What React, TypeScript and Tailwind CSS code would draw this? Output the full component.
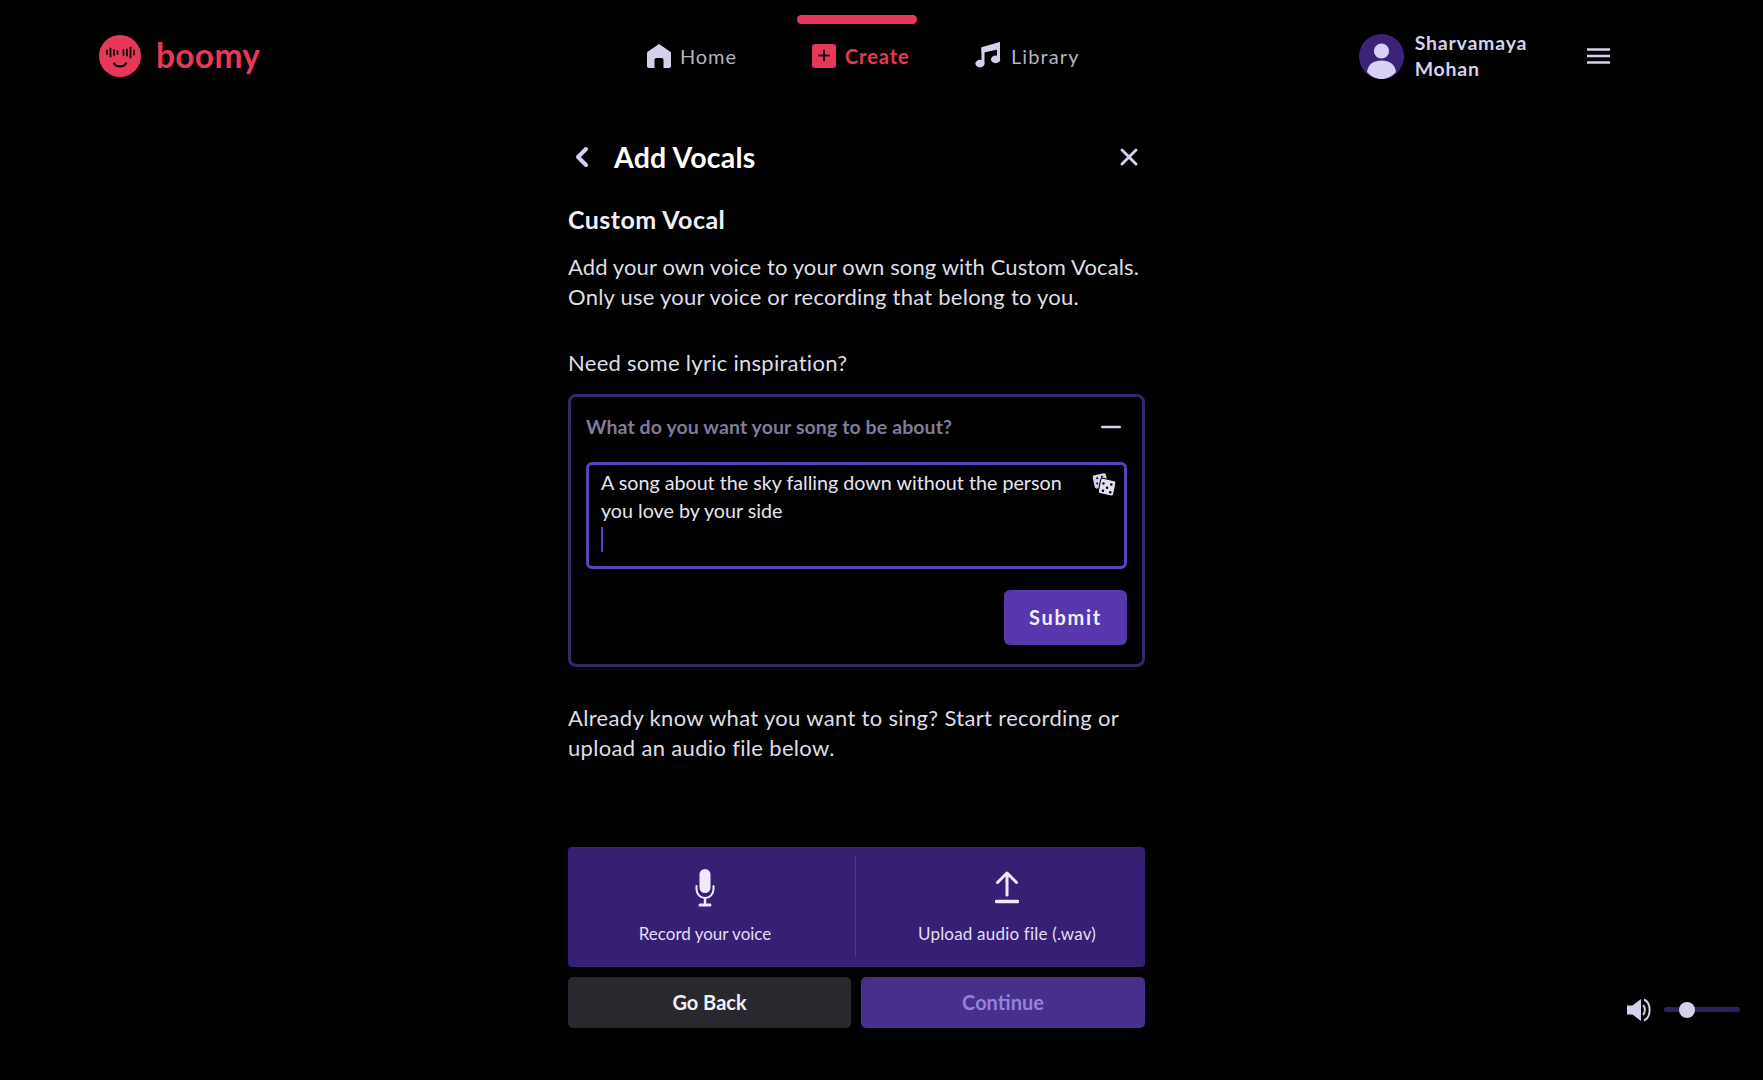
import React from "react";
import { ChevronLeft, X, Minus } from "lucide-react";

const LogoMark = () => (
  <svg width="42" height="42" viewBox="0 0 42 42" className="shrink-0">
    <circle cx="21" cy="21" r="21" fill="#e8385a" />
    <g stroke="#0a0a0a" strokeWidth="1.800" strokeLinecap="round">
      <path d="M8 15.500v3.500M11.500 13.500v8M15 15v5M18.500 16v3M24.500 15v5M28 14.500v6M31.500 12.500v10M35 15.500v4" />
    </g>
    <path d="M15 28.500c2.500 4 9.500 4 12 0" fill="none" stroke="#0a0a0a" strokeWidth="2.200" strokeLinecap="round" />
  </svg>
);

const HomeIcon = () => (
  <svg width="24" height="24" viewBox="0 0 24 24" className="shrink-0">
    <path
      d="M12 0 L23 7.500 C23.700 8 24 8.600 24 9.500 V22 C24 23.200 23.200 24 22 24 H16.500 V16 C16.500 14.800 15.700 14 14.500 14 H9.500 C8.300 14 7.500 14.800 7.500 16 V24 H2 C0.800 24 0 23.200 0 22 V9.500 C0 8.600 0.300 8 1 7.500 Z"
      fill="#d3d1ec"
    />
  </svg>
);

const PlusSquare = () => (
  <svg width="24" height="24" viewBox="0 0 24 24" className="shrink-0">
    <rect width="24" height="24" rx="3" fill="#e8385a" />
    <path d="M12 6.500v10M7 11.500h10" stroke="#1a0a10" strokeWidth="2" strokeLinecap="round" />
  </svg>
);

const MusicIcon = () => (
  <svg width="26" height="28" viewBox="0 0 26 28" className="mb-[5px] shrink-0">
    <path d="M8 23V8.500L23.500 4V19" fill="none" stroke="#d3d1ec" strokeWidth="3" />
    <path d="M6.500 7.500 25 2.500V9L6.500 13z" fill="#d3d1ec" />
    <ellipse cx="5" cy="23.600" rx="4.600" ry="3.800" fill="#d3d1ec" />
    <ellipse cx="20.600" cy="19.400" rx="4.600" ry="3.800" fill="#d3d1ec" />
  </svg>
);

const Avatar = () => (
  <svg width="45" height="45" viewBox="0 0 45 45" className="shrink-0">
    <circle cx="22.500" cy="22.500" r="22.500" fill="#3b2478" />
    <circle cx="22.500" cy="17" r="7.600" fill="#d9d0f5" />
    <path d="M8 38c1-8 7-11.500 14.500-11.500S36 30 37 38c-4 4.500-9 7-14.500 7S12 42.500 8 38z" fill="#d9d0f5" />
  </svg>
);

const HamburgerIcon = () => (
  <svg width="23" height="16" viewBox="0 0 23 16" className="shrink-0">
    <path d="M0 1.500h23M0 8h23M0 14.500h23" stroke="#d3d1ec" strokeWidth="2.600" />
  </svg>
);

const DiceIcon = () => (
  <svg width="25" height="25" viewBox="0 0 24 24" className="shrink-0">
    <rect x="1.500" y="2" width="13" height="13" rx="2" transform="rotate(-12 8 8.500)" fill="#d3d1ec" />
    <g fill="#000">
      <circle cx="5" cy="6" r="1" />
      <circle cx="9.500" cy="4.500" r="1" />
      <circle cx="5" cy="11" r="1" />
    </g>
    <rect x="7" y="7" width="15" height="15" rx="2" transform="rotate(12 14.500 14.500)" fill="#e2e0f4" stroke="#000" strokeWidth="1" />
    <g fill="#000">
      <circle cx="11" cy="11" r="1.200" />
      <circle cx="18.500" cy="12" r="1.200" />
      <circle cx="14.500" cy="15" r="1.200" />
      <circle cx="10.500" cy="18" r="1.200" />
      <circle cx="17.500" cy="19.500" r="1.200" />
    </g>
  </svg>
);

const MicIcon = () => (
  <svg width="20" height="38" viewBox="0 0 20 38" className="shrink-0">
    <rect x="4.500" y="0" width="11" height="24" rx="5.500" fill="#f0e9fd" />
    <path d="M1.500 17v3c0 5 3.500 9 8.500 9s8.500-4 8.500-9v-3" fill="none" stroke="#f0e9fd" strokeWidth="2" strokeLinecap="round" />
    <path d="M10 29v6" stroke="#f0e9fd" strokeWidth="2.400" />
    <path d="M5 36h10" stroke="#f0e9fd" strokeWidth="3" strokeLinecap="round" />
  </svg>
);

const UploadIcon = () => (
  <svg width="24" height="34" viewBox="0 0 24 34" className="shrink-0">
    <path d="M12 24V2M2.500 11.500 12 2l9.500 9.500" fill="none" stroke="#f0e9fd" strokeWidth="3" strokeLinecap="round" strokeLinejoin="round" />
    <path d="M1.500 30.500h21" stroke="#f0e9fd" strokeWidth="3.400" strokeLinecap="round" />
  </svg>
);

const SpeakerIcon = () => (
  <svg width="25" height="24" viewBox="0 0 25 24" className="shrink-0">
    <path d="M0 7.500h5.500L14 1v22l-8.500-6.500H0z" fill="#d3d1ec" />
    <path d="M16 7c2.500 2.500 2.500 7.500 0 10" fill="none" stroke="#d3d1ec" strokeWidth="2" />
    <path d="M17 1.500c7.500 3.500 7.500 17.500 0 21" fill="none" stroke="#d3d1ec" strokeWidth="2" />
  </svg>
);

// --- Main Page ---
export default function App() {
  return (
    <div className="h-[1080px] w-full overflow-hidden bg-black font-['Lato',sans-serif] text-[#e9e7f5]">
      {/* Header */}
      <header className="flex h-[112px] items-start pl-[99px]">
        <div className="flex h-[112px] w-[548px] items-center gap-[15px] pb-[1px]">
          <LogoMark />
          <span className="mt-[1px] text-[33.500px] font-bold leading-none tracking-[0.3px] text-[#e8385a]">boomy</span>
        </div>

        <nav className="flex h-[112px] items-center">
          <a className="flex w-[165px] items-center gap-[9px] text-[20px] tracking-[0.9px] text-[#b4b3c2]">
            <HomeIcon />
            Home
          </a>
          <a className="relative flex h-[112px] w-[163px] items-center gap-[9px] text-[20px] font-bold tracking-[0.9px] text-[#e8385a]">
            <span className="absolute left-[-15px] top-[15px] h-[9px] w-[120px] rounded-full bg-[#e8385a]" />
            <PlusSquare />
            Create
          </a>
          <a className="flex items-center gap-[10px] text-[20px] tracking-[1.100px] text-[#b4b3c2]">
            <MusicIcon />
            Library
          </a>
        </nav>

        <div className="ml-[279px] flex h-[112px] items-center">
          <Avatar />
          <div className="ml-[11px] w-[172px] text-[19.500px] font-bold leading-[26.500px] tracking-[0.8px] text-[#d3d1ec]">
            Sharvamaya
            <br />
            Mohan
          </div>
          <HamburgerIcon />
        </div>
      </header>

      <div className="flex">
        <main className="ml-[568px] w-[577px]">
          {/* Title row */}
          <div className="mt-[11px] flex h-[68px] items-center justify-between pr-[2px]">
            <div className="flex items-center">
              <ChevronLeft className="ml-[-2px] h-[32px] w-[32px] text-[#d3d1ec]" strokeWidth={3} />
              <h1 className="ml-[16px] text-[28.500px] font-bold tracking-[0.2px] text-white">Add Vocals</h1>
            </div>
            <X className="h-[28px] w-[28px] text-[#d3d1ec]" strokeWidth={2.5} />
          </div>

          <h2 className="mt-[12px] text-[25px] font-bold leading-[32px] tracking-[0.45px] text-[#f1f0f8]">Custom Vocal</h2>
          <p className="mt-[16.500px] text-[22px] leading-[30.500px] tracking-[0.24px] text-[#dedde8]">
            <span className="tracking-[0.12px]">Add your own voice to your own song with Custom Vocals.</span>
            <br />
            Only use your voice or recording that belong to you.
          </p>
          <p className="mt-[35px] text-[22px] leading-[30px] tracking-[0.28px] text-[#dedde8]">Need some lyric inspiration?</p>

          {/* Lyric box */}
          <section className="mt-[16px] h-[273px] rounded-[8px] border-[3px] border-[#352668] px-[15px] pt-[10px]">
            <div className="flex h-[40px] items-center justify-between pr-[1px]">
              <span className="text-[19.500px] font-bold tracking-[0.1px] text-[#7f7b9c]">What do you want your song to be about?</span>
              <Minus className="h-[30px] w-[30px] text-[#d3d1ec]" strokeWidth={2} />
            </div>
            <div className="mt-[15px] flex h-[107px] justify-between rounded-[6px] border-[3px] border-[#5a45c0] pl-[12px] pr-[7px] pt-[4px]">
              <div className="text-[19.700px] leading-[28px] text-[#e6e5ef]">
                A song about the sky falling down without the person
                <br />
                you love by your side
                <span className="mt-[2px] block h-[25px] w-[1.500px] bg-[#5a45c0]" />
              </div>
              <div className="pt-[3px]">
                <DiceIcon />
              </div>
            </div>
            <div className="mt-[21px] flex justify-end">
              <button className="h-[55px] w-[123px] rounded-[6px] bg-[#5836ab] text-[20px] font-bold tracking-[1.700px] text-[#f1eefa]">
                Submit
              </button>
            </div>
          </section>

          <p className="mt-[36px] text-[22px] leading-[30.500px] tracking-[0.33px] text-[#dedde8]">
            Already know what you want to sing? Start recording or
            <br />
            upload an audio file below.
          </p>

          {/* Record and upload */}
          <div className="mt-[83px] flex h-[120px] items-center rounded-[4px] bg-[#362073]">
            <button className="flex h-full w-[287px] flex-col items-center pr-[13px] pt-[22px] text-[17px] text-[#e3dcf5]">
              <MicIcon />
              <span className="mt-[14px]">Record your voice</span>
            </button>
            <div className="h-[101px] w-px bg-[#4b3590]" />
            <button className="flex h-full flex-1 flex-col items-center pl-[13px] pt-[24px] text-[17px] tracking-[0.2px] text-[#e3dcf5]">
              <UploadIcon />
              <span className="mt-[16px]">Upload audio file (.wav)</span>
            </button>
          </div>

          <div className="mt-[10px] flex gap-[10px]">
            <button className="h-[51px] w-[283px] rounded-[5px] bg-[#29282e] text-[20px] font-bold text-[#f1f0f8]">
              Go Back
            </button>
            <button className="h-[51px] flex-1 rounded-[5px] bg-[#46308c] text-[20px] font-bold text-[#9482da]">
              Continue
            </button>
          </div>
        </main>

        {/* Volume */}
        <div className="flex flex-1 items-end justify-end pb-[6px] pr-[23px]">
          <div className="flex items-center">
            <SpeakerIcon />
            <div className="relative ml-[12px] h-[5px] w-[76px] rounded-full bg-[#2d2260]">
              <span className="absolute left-[15px] top-[-5.500px] h-[16px] w-[16px] rounded-full bg-[#d3d1ec]" />
            </div>
          </div>
        </div>
      </div>
    </div>
  );
}
